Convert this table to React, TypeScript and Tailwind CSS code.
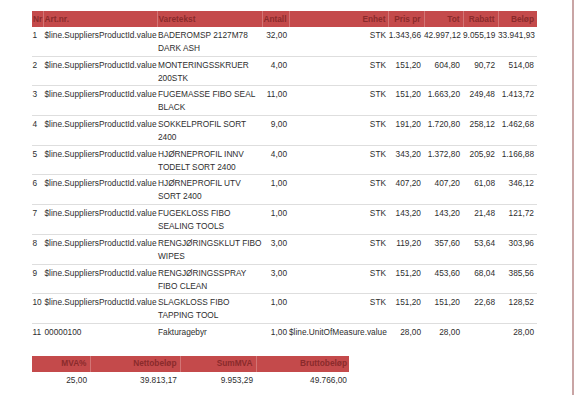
import React from 'react';

type Line = {
  nr: number;
  artnr: string;
  text: string[];
  antall: string;
  enhet: string;
  pris: string;
  tot: string;
  rabatt: string;
  belop: string;
};

const SPI = '$line.SuppliersProductId.value';

const lines: Line[] = [
  { nr: 1, artnr: SPI, text: ['BADEROMSP 2127M78', 'DARK ASH'], antall: '32,00', enhet: 'STK', pris: '1.343,66', tot: '42.997,12', rabatt: '9.055,19', belop: '33.941,93' },
  { nr: 2, artnr: SPI, text: ['MONTERINGSSKRUER', '200STK'], antall: '4,00', enhet: 'STK', pris: '151,20', tot: '604,80', rabatt: '90,72', belop: '514,08' },
  { nr: 3, artnr: SPI, text: ['FUGEMASSE FIBO SEAL', 'BLACK'], antall: '11,00', enhet: 'STK', pris: '151,20', tot: '1.663,20', rabatt: '249,48', belop: '1.413,72' },
  { nr: 4, artnr: SPI, text: ['SOKKELPROFIL SORT', '2400'], antall: '9,00', enhet: 'STK', pris: '191,20', tot: '1.720,80', rabatt: '258,12', belop: '1.462,68' },
  { nr: 5, artnr: SPI, text: ['HJØRNEPROFIL INNV', 'TODELT SORT 2400'], antall: '4,00', enhet: 'STK', pris: '343,20', tot: '1.372,80', rabatt: '205,92', belop: '1.166,88' },
  { nr: 6, artnr: SPI, text: ['HJØRNEPROFIL UTV', 'SORT 2400'], antall: '1,00', enhet: 'STK', pris: '407,20', tot: '407,20', rabatt: '61,08', belop: '346,12' },
  { nr: 7, artnr: SPI, text: ['FUGEKLOSS FIBO', 'SEALING TOOLS'], antall: '1,00', enhet: 'STK', pris: '143,20', tot: '143,20', rabatt: '21,48', belop: '121,72' },
  { nr: 8, artnr: SPI, text: ['RENGJØRINGSKLUT FIBO', 'WIPES'], antall: '3,00', enhet: 'STK', pris: '119,20', tot: '357,60', rabatt: '53,64', belop: '303,96' },
  { nr: 9, artnr: SPI, text: ['RENGJØRINGSSPRAY', 'FIBO CLEAN'], antall: '3,00', enhet: 'STK', pris: '151,20', tot: '453,60', rabatt: '68,04', belop: '385,56' },
  { nr: 10, artnr: SPI, text: ['SLAGKLOSS FIBO', 'TAPPING TOOL'], antall: '1,00', enhet: 'STK', pris: '151,20', tot: '151,20', rabatt: '22,68', belop: '128,52' },
  { nr: 11, artnr: '00000100', text: ['Fakturagebyr'], antall: '1,00', enhet: '$line.UnitOfMeasure.value', pris: '28,00', tot: '28,00', rabatt: '', belop: '28,00' },
];

const th = 'h-[16px] p-0 font-bold text-[#8a2a2b] border-r border-[#d27575] last:border-r-0';
const td = 'p-0 pt-[2px] pb-[0.7px] align-top';

const App: React.FC = () => {
  return (
    <div
      className="flex h-screen w-full bg-white text-[8.3px] leading-[13px] text-[#2e2e2e]"
      style={{ fontFamily: '"Liberation Sans", Arial, sans-serif' }}
    >
      <div className="flex-1 pl-[32px] pt-[11px]">
        {/* Order lines */}
        <table className="w-[505px] table-fixed border-collapse">
          <colgroup>
            <col className="w-[11px]" />
            <col className="w-[114px]" />
            <col className="w-[105px]" />
            <col className="w-[27px]" />
            <col className="w-[99px]" />
            <col className="w-[36px]" />
            <col className="w-[39px]" />
            <col className="w-[35px]" />
            <col className="w-[39px]" />
          </colgroup>
          <thead>
            <tr className="bg-[#c44a4b]">
              <th className={`${th} text-left pl-[1px]`}>Nr</th>
              <th className={`${th} text-left pl-[1px]`}>Art.nr.</th>
              <th className={`${th} text-left pl-[1px]`}>Varetekst</th>
              <th className={`${th} text-right pr-[2px]`}>Antall</th>
              <th className={`${th} text-right pr-[2px]`}>Enhet</th>
              <th className={`${th} text-right pr-[3px]`}>Pris pr</th>
              <th className={`${th} text-right pr-[3px]`}>Tot</th>
              <th className={`${th} text-right pr-[3px]`}>Rabatt</th>
              <th className={`${th} text-right pr-[3px]`}>Beløp</th>
            </tr>
          </thead>
          <tbody>
            {lines.map(l => (
              <tr key={l.nr} className="border-b border-[#dedede] last:border-b-0">
                <td className={`${td} pl-[0.5px] whitespace-nowrap overflow-visible`}>{l.nr}</td>
                <td className={`${td} pl-[1.5px] whitespace-nowrap`}>{l.artnr}</td>
                <td className={`${td} pl-[1px]`}>
                  {l.text.map((t, i) => (
                    <div key={i}>{t}</div>
                  ))}
                </td>
                <td className={`${td} text-right pr-[2px]`}>{l.antall}</td>
                <td className={`${td} text-right pr-[2px] whitespace-nowrap`}>{l.enhet}</td>
                <td className={`${td} text-right pr-[3px]`}>{l.pris}</td>
                <td className={`${td} text-right pr-[3px]`}>{l.tot}</td>
                <td className={`${td} text-right pr-[3px]`}>{l.rabatt}</td>
                <td className={`${td} text-right pr-[3px]`}>{l.belop}</td>
              </tr>
            ))}
          </tbody>
        </table>

        {/* VAT summary */}
        <table className="mt-[16px] w-[317px] table-fixed border-collapse">
          <colgroup>
            <col className="w-[58px]" />
            <col className="w-[90px]" />
            <col className="w-[76px]" />
            <col className="w-[93px]" />
          </colgroup>
          <thead>
            <tr className="bg-[#c44a4b]">
              <th className={`${th} text-right pr-[3px]`}>MVA%</th>
              <th className={`${th} text-right pr-[3px]`}>Nettobeløp</th>
              <th className={`${th} text-right pr-[3px]`}>SumMVA</th>
              <th className={`${th} text-right pr-[2px]`}>Bruttobeløp</th>
            </tr>
          </thead>
          <tbody>
            <tr>
              <td className={`${td} text-right pr-[3px]`}>25,00</td>
              <td className={`${td} text-right pr-[3px]`}>39.813,17</td>
              <td className={`${td} text-right pr-[3px]`}>9.953,29</td>
              <td className={`${td} text-right pr-[2px]`}>49.766,00</td>
            </tr>
          </tbody>
        </table>
      </div>
      <div className="w-[2px] shrink-0 bg-[#c9a5a5]" />
      <div className="w-[1px] shrink-0" />
    </div>
  );
};

export default App;
